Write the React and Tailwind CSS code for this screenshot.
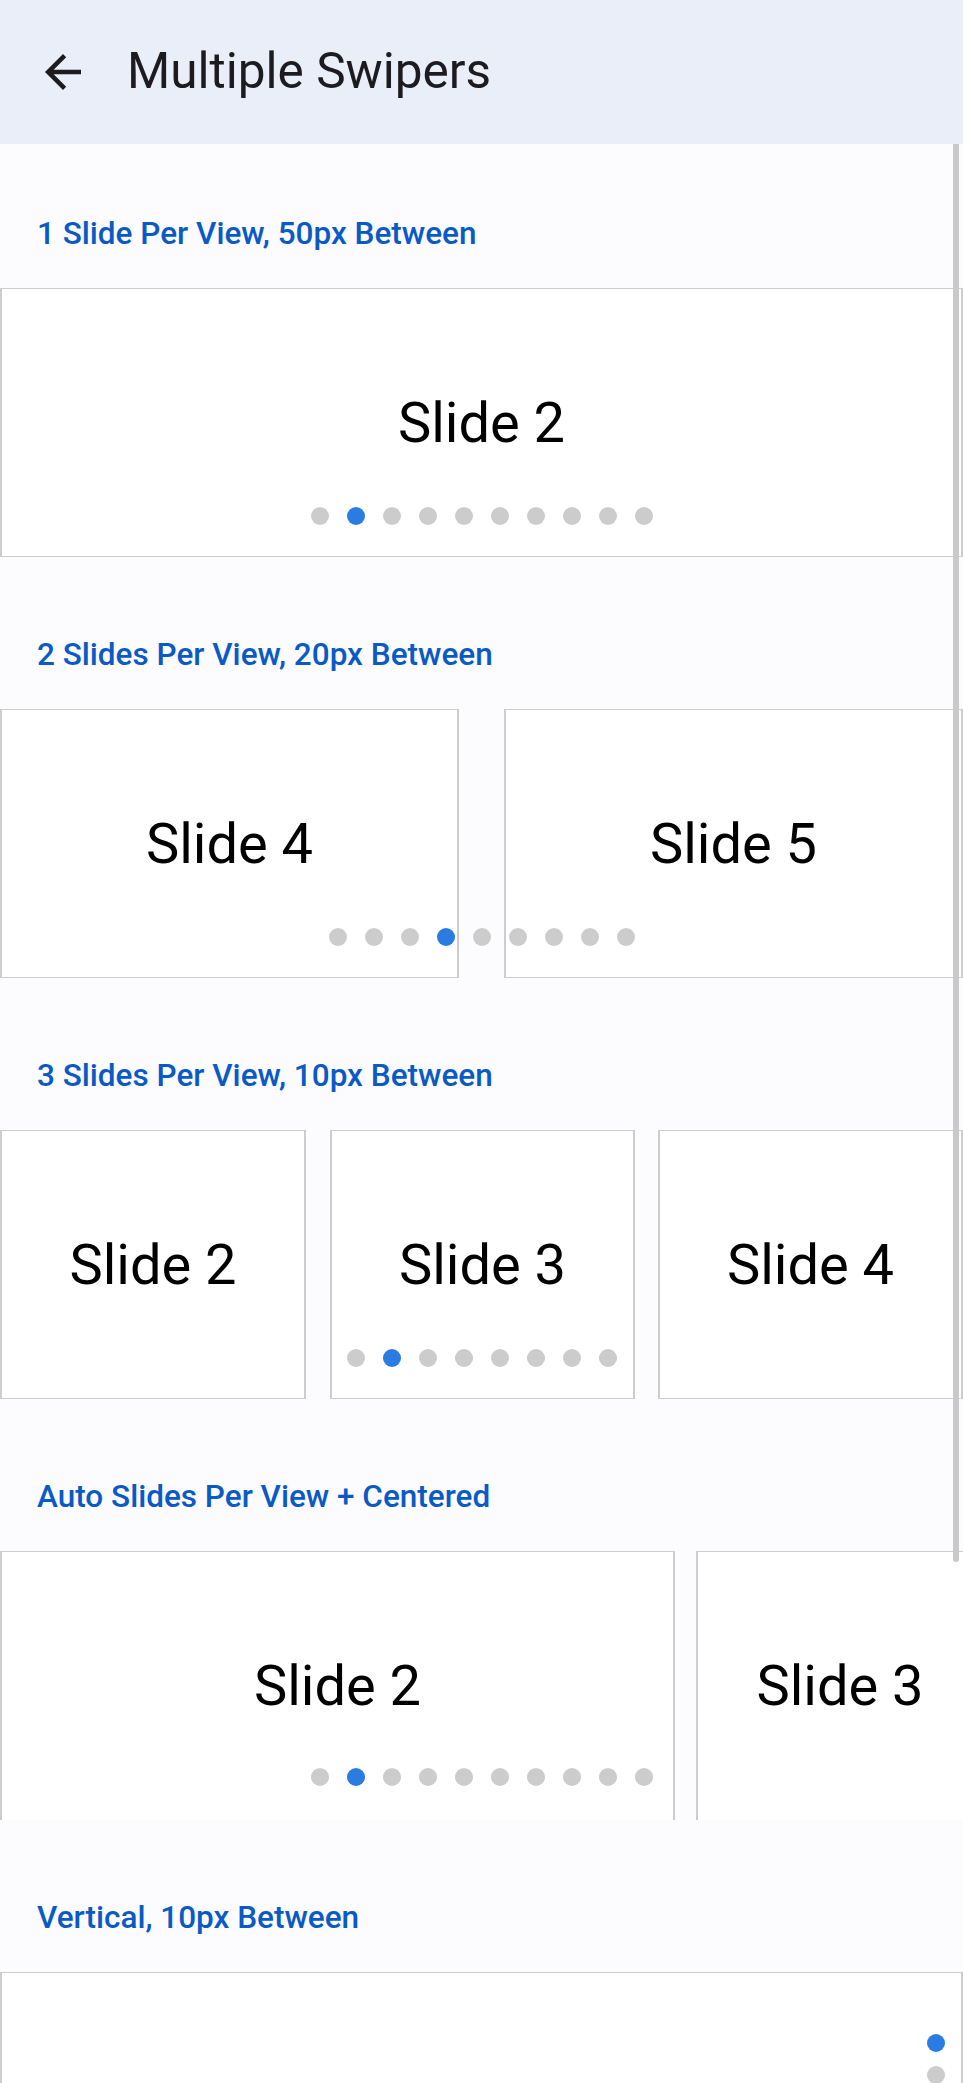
import React from 'react'

const font = { fontFamily: 'Roboto, "Noto Sans", Arial, sans-serif' }

function Dots({ count, active, className }) {
  return (
    <div className={`pointer-events-none absolute left-0 right-0 z-10 flex justify-center gap-[18px] ${className}`}>
      {Array.from({ length: count }).map((_, i) => (
        <span
          key={i}
          className={`h-[18px] w-[18px] rounded-full ${i === active ? 'bg-[#2a7be2]' : 'bg-[#cccccc]'}`}
        />
      ))}
    </div>
  )
}

function Slide({ label, className = '' }) {
  return (
    <div className={`flex shrink-0 items-center justify-center border-x-2 border-y border-[#cdcdcd] bg-white ${className}`}>
      <span className="text-[56px] leading-none text-black">{label}</span>
    </div>
  )
}

function Heading({ children }) {
  return (
    <div className="h-[144px] pl-[37px] pt-[72px]">
      <h2 className="text-[31.5px] font-medium leading-[36px] text-[#0a5ac6]">{children}</h2>
    </div>
  )
}

export default function App() {
  return (
    <div style={font} className="relative h-[2083px] w-[963px] overflow-hidden bg-[#fcfbfe]">
      <header className="flex h-[144px] items-center bg-[#e9eef9]">
        <button type="button" className="ml-[36px] flex h-[54px] w-[54px] items-center justify-center text-[#1d1b20]">
          <svg viewBox="0 0 24 24" className="h-[54px] w-[54px]" fill="currentColor">
            <path d="M20 11H7.83l5.59-5.59L12 4l-8 8 8 8 1.41-1.41L7.83 13H20v-2z" />
          </svg>
        </button>
        <h1 className="ml-[37px] text-[49.5px] leading-none text-[#1d1b20]">Multiple Swipers</h1>
      </header>

      <section>
        <Heading>1 Slide Per View, 50px Between</Heading>
        <div className="relative mb-[8px] flex h-[269px]">
          <Slide label="Slide 2" className="h-full w-[963px]" />
          <Dots count={10} active={1} className="bottom-[32px]" />
        </div>
      </section>

      <section>
        <Heading>2 Slides Per View, 20px Between</Heading>
        <div className="relative mb-[8px] flex h-[269px] gap-[45px]">
          <Slide label="Slide 4" className="h-full w-[459px]" />
          <Slide label="Slide 5" className="h-full w-[459px]" />
          <Dots count={9} active={3} className="bottom-[32px]" />
        </div>
      </section>

      <section>
        <Heading>3 Slides Per View, 10px Between</Heading>
        <div className="relative mb-[8px] flex h-[269px]">
          <Slide label="Slide 2" className="h-full w-[306px]" />
          <Slide label="Slide 3" className="ml-[24px] h-full w-[305px]" />
          <Slide label="Slide 4" className="ml-[23px] h-full w-[305px]" />
          <Dots count={8} active={1} className="bottom-[32px]" />
        </div>
      </section>

      <section>
        <Heading>Auto Slides Per View + Centered</Heading>
        <div className="relative mb-[8px] flex h-[269px] items-start gap-[21px] overflow-hidden">
          <Slide label="Slide 2" className="h-[300px] w-[675px] pb-[31px]" />
          <Slide label="Slide 3" className="h-[300px] w-[288px] pb-[31px]" />
          <Dots count={10} active={1} className="bottom-[34px]" />
        </div>
      </section>

      <section>
        <Heading>Vertical, 10px Between</Heading>
        <div className="relative h-[269px]">
          <div className="h-full w-[963px] border-x-2 border-y border-[#cdcdcd] bg-white" />
          <div className="absolute right-[18px] top-[62px] flex flex-col gap-[14px]">
            {Array.from({ length: 6 }).map((_, i) => (
              <span
                key={i}
                className={`h-[18px] w-[18px] rounded-full ${i === 0 ? 'bg-[#2a7be2]' : 'bg-[#cccccc]'}`}
              />
            ))}
          </div>
        </div>
      </section>

      <div className="absolute left-[953px] top-[144px] h-[1418px] w-[6px] rounded-b-full bg-[#c9c9c9]" />
    </div>
  )
}
